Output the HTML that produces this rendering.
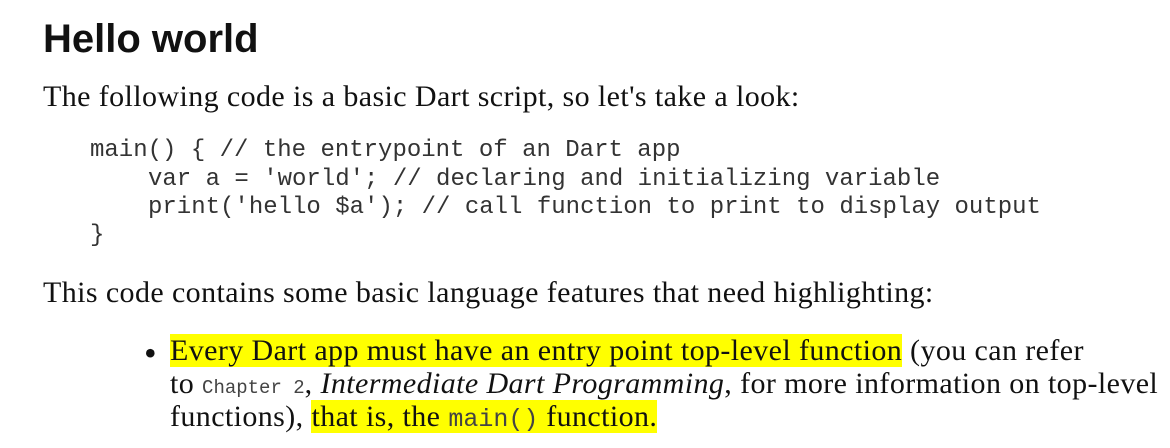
<!DOCTYPE html>
<html><head><style>
body{margin:0;width:1170px;height:448px;background:#fff;color:#111;position:relative;overflow:hidden;font-family:"Liberation Serif",serif;}
.a{position:absolute;white-space:pre;}
h1{position:absolute;left:43px;top:17px;margin:0;font:bold 40px "Liberation Sans",sans-serif;}
.p{font-size:30px;letter-spacing:0.4px;}
.c{font:24px "Liberation Mono",monospace;color:#333;}
.m{font-family:"Liberation Mono",monospace;font-size:19px;color:#444;letter-spacing:0;}
.m2{font-family:"Liberation Mono",monospace;font-size:25px;color:#444;letter-spacing:0;}
.h{background:#ffff00;}
</style></head><body>
<h1>Hello world</h1>
<div class="a p" style="left:43px;top:80px">The following code is a basic Dart script, so let's take a look:</div>
<div class="a c" style="left:90px;top:137px">main() { // the entrypoint of an Dart app</div>
<div class="a c" style="left:148px;top:166px">var a = 'world'; // declaring and initializing variable</div>
<div class="a c" style="left:148px;top:194px">print('hello $a'); // call function to print to display output</div>
<div class="a c" style="left:90px;top:222px">}</div>
<div class="a p" style="left:43px;top:276px">This code contains some basic language features that need highlighting:</div>
<div class="a p" style="left:144px;top:332px;font-size:36px">•</div>
<div class="a p" style="left:170px;top:334px"><span class="h">Every Dart app must have an entry point top-level function</span> (you can refer</div>
<div class="a p" style="left:170px;top:367px">to <span class="m">Chapter 2</span>, <i>Intermediate Dart Programming</i>, for more information on top-level</div>
<div class="a p" style="left:170px;top:400px">functions), <span class="h">that is, the <span class="m2">main()</span> function.</span></div>
</body></html>
